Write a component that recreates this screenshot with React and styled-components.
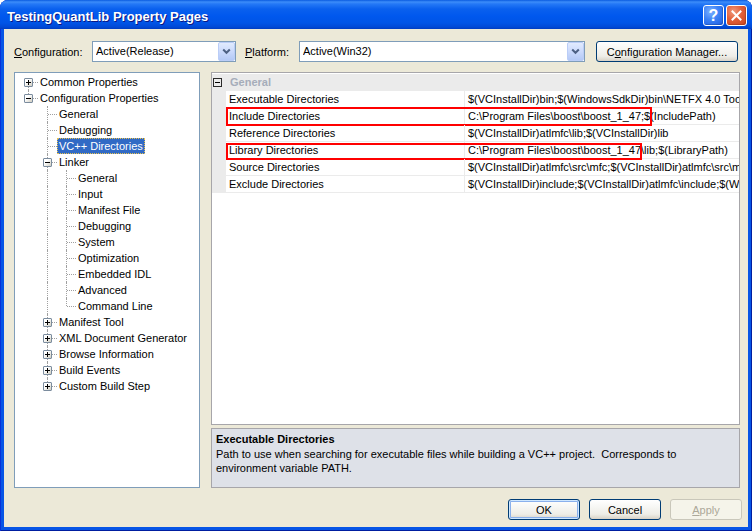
import React from 'react';
import styled, { createGlobalStyle, css } from 'styled-components';

const GlobalStyle = createGlobalStyle`
  html, body { margin: 0; padding: 0; background: #ffffff; }
  body { font-family: "Liberation Sans", Arial, sans-serif; font-size: 11px; color: #000; }
  * { box-sizing: border-box; }
`;

const FONT = `"Liberation Sans", Arial, sans-serif`;
const LINE = '#EBEBEB';
const DOT = '#A0A0A0';

const Window = styled.div`
  width: 752px;
  height: 531px;
  display: flex;
  flex-direction: column;
  background: #0755E6;
  border-radius: 8px 8px 0 0;
  overflow: hidden;
  box-shadow: inset 1px 0 #0831D9, inset -1px 0 #001EA0, inset 0 -1px #001EA0;
`;

const TitleBar = styled.div`
  height: 29px;
  flex: none;
  display: flex;
  align-items: center;
  padding: 0 5px 0 7px;
  background: linear-gradient(
    to bottom,
    #0A5BE0 0px,
    #3D8DF9 2px,
    #2478F6 4px,
    #0A60EE 9px,
    #0058EE 16px,
    #0054E6 23px,
    #0049D6 27px,
    #003CC0 29px
  );
`;

const Title = styled.div`
  flex: 1;
  color: #fff;
  font: bold 13px ${FONT};
  padding-top: 3px;
  text-shadow: 1px 1px #0A1883;
  white-space: nowrap;
`;

const CaptionButtons = styled.div`
  display: flex;
  gap: 2px;
  margin-top: 2px;
`;

const CaptionButton = styled.div`
  width: 21px;
  height: 21px;
  border: 1px solid #fff;
  border-radius: 3px;
  display: flex;
  align-items: center;
  justify-content: center;
  color: #fff;
  font: bold 16px ${FONT};
  background: ${(p) =>
    p.$close
      ? 'radial-gradient(circle at 35% 30%, #F09A7E 0%, #E2603A 45%, #C7421C 100%)'
      : 'radial-gradient(circle at 35% 30%, #7DB1FF 0%, #3C82F6 45%, #1E5BE0 100%)'};
  box-shadow: inset -1px -1px 0 rgba(0, 0, 0, 0.15);
`;

const Body = styled.div`
  flex: 1;
  margin: 0 4px 4px;
  background: #ECE9D8;
  display: flex;
  flex-direction: column;
`;

const ConfigRow = styled.div`
  display: flex;
  align-items: center;
  padding: 12px 0 0 10px;
  height: 33px;
  flex: none;
`;

const FieldLabel = styled.label`
  width: ${(p) => p.$w}px;
  margin-left: ${(p) => p.$ml || 0}px;
  flex: none;
  white-space: nowrap;
  padding-top: 1px;
`;

const Combo = styled.div`
  width: ${(p) => p.$w}px;
  height: 21px;
  flex: none;
  border: 1px solid #7F9DB9;
  background: #fff;
  display: flex;
  align-items: stretch;
  padding-left: 3px;
`;

const ComboText = styled.span`
  flex: 1;
  line-height: 19px;
  white-space: nowrap;
  overflow: hidden;
`;

const ComboButton = styled.span`
  width: 17px;
  flex: none;
  border: 1px solid #BACDF7;
  border-radius: 2px;
  background: linear-gradient(to bottom, #E2EBFE 0%, #CBDAFC 50%, #B4C9F6 100%);
  display: flex;
  align-items: center;
  justify-content: center;
`;

const XPButton = styled.button`
  width: ${(p) => p.$w || 72}px;
  height: 21px;
  flex: none;
  margin-left: ${(p) => p.$ml || 0}px;
  padding: 0;
  font: 11px ${FONT};
  color: #000;
  border: 1px solid #003C74;
  border-radius: 3px;
  background: linear-gradient(to bottom, #FFFFFF 0%, #F7F7F4 35%, #EEEDE7 75%, #D8D2C6 100%);
  ${(p) =>
    p.$default &&
    css`
      box-shadow: inset 0 0 0 1px #CEE7FF, inset 0 0 0 2px #8AB0EC;
    `}
  ${(p) =>
    p.disabled &&
    css`
      color: #ACA899;
      border-color: #C9C7BA;
      background: #F5F4EA;
    `}
`;

const MainArea = styled.div`
  display: flex;
  gap: 11px;
  height: 416px;
  margin-top: 10px;
  padding: 0 8px 0 10px;
  flex: none;
`;

const TreeBox = styled.div`
  width: 186px;
  flex: none;
  border: 1px solid #7F9DB9;
  background: #fff;
  padding-top: 1px;
  display: flex;
  flex-direction: column;
`;

const TreeRow = styled.div`
  height: 16px;
  display: flex;
  align-items: center;
  padding-left: 4px;
`;

const vertical = {
  none: css`display: none;`,
  pipe: css`top: 0; bottom: 0;`,
  tee: css`top: 0; bottom: 0;`,
  ell: css`top: 0; height: 8px;`,
  start: css`top: 8px; bottom: 0;`,
};

const Cell = styled.span`
  position: relative;
  width: 19px;
  height: 16px;
  flex: none;
  display: flex;
  align-items: center;
  padding-left: 5px;
  &::before {
    content: '';
    position: absolute;
    left: 9px;
    border-left: 1px dotted ${DOT};
    ${(p) => vertical[p.$v]}
  }
  ${(p) =>
    p.$last &&
    css`
      &::after {
        content: '';
        position: absolute;
        left: 10px;
        top: 8px;
        width: 9px;
        border-top: 1px dotted ${DOT};
      }
    `}
`;

const Expander = styled.span`
  position: relative;
  z-index: 1;
  width: 9px;
  height: 9px;
  flex: none;
  border: 1px solid #7B8C9E;
  border-radius: 1px;
  background: linear-gradient(135deg, #ffffff 35%, #D0CDC0 100%);
  &::before {
    content: '';
    position: absolute;
    left: 1px;
    top: 3px;
    width: 5px;
    height: 1px;
    background: #000;
  }
  ${(p) =>
    p.$plus &&
    css`
      &::after {
        content: '';
        position: absolute;
        left: 3px;
        top: 1px;
        width: 1px;
        height: 5px;
        background: #000;
      }
    `}
`;

const TreeLabel = styled.span`
  height: 16px;
  line-height: 16px;
  padding: 0 2px;
  white-space: nowrap;
  ${(p) =>
    p.$selected &&
    css`
      background: #316AC5;
      color: #fff;
      outline: 1px dotted #E8C24F;
      outline-offset: -1px;
    `}
`;

const GridPanel = styled.div`
  flex: 1;
  display: flex;
  flex-direction: column;
  gap: 3px;
  min-width: 0;
`;

const GridView = styled.div`
  flex: 1;
  border: 1px solid #A7A6AA;
  background: #fff;
  padding-top: 1px;
  overflow: hidden;
`;

const CategoryRow = styled.div`
  height: 17px;
  display: grid;
  grid-template-columns: 14px 1fr;
  align-items: center;
  background: ${LINE};
`;

const CategoryToggle = styled.span`
  position: relative;
  width: 9px;
  height: 9px;
  margin-left: 1px;
  border: 1px solid #2B2B2B;
  &::before {
    content: '';
    position: absolute;
    left: 1px;
    top: 3px;
    width: 5px;
    height: 1px;
    background: #000;
  }
`;

const CategoryName = styled.span`
  font-weight: bold;
  color: #A6ADBA;
  padding-left: 4px;
  line-height: 17px;
`;

const PropRow = styled.div`
  position: relative;
  height: 17px;
  display: grid;
  grid-template-columns: 14px 239px 1fr;
  border-bottom: 1px solid ${LINE};
`;

const Margin = styled.span`
  background: ${LINE};
`;

const PropName = styled.span`
  padding-left: 3px;
  line-height: 16px;
  border-right: 1px solid ${LINE};
  white-space: nowrap;
  overflow: hidden;
`;

const PropValue = styled.span`
  padding-left: 3px;
  line-height: 16px;
  white-space: nowrap;
  overflow: hidden;
`;

const Highlight = styled.span`
  position: absolute;
  left: 14px;
  top: ${(p) => p.$top}px;
  width: ${(p) => p.$w}px;
  height: ${(p) => p.$h}px;
  border: 2px solid #FF0000;
  pointer-events: none;
`;

const DescPanel = styled.div`
  height: 60px;
  flex: none;
  border: 1px solid #A7A6AA;
  background: #DEE1E8;
  padding: 3px 4px 0;
  line-height: 14px;
`;

const DescTitle = styled.div`
  font-weight: bold;
  margin-bottom: 1px;
`;

const DescText = styled.div`
  white-space: pre;
`;

const ButtonRow = styled.div`
  display: flex;
  justify-content: flex-end;
  gap: 9px;
  margin-top: 11px;
  padding-right: 6px;
`;

const Chevron = () => (
  <svg width="9" height="7" viewBox="0 0 9 7">
    <path d="M1.2 1.5 L4.5 4.8 L7.8 1.5" fill="none" stroke="#4D6185" strokeWidth="2" />
  </svg>
);

const CloseGlyph = () => (
  <svg width="11" height="11" viewBox="0 0 11 11">
    <path d="M1.5 1.5 L9.5 9.5 M9.5 1.5 L1.5 9.5" stroke="#fff" strokeWidth="2" strokeLinecap="square" />
  </svg>
);

const tree = [
  { label: 'Common Properties', cells: ['start'], exp: '+' },
  { label: 'Configuration Properties', cells: ['ell'], exp: '-' },
  { label: 'General', cells: ['none', 'tee'] },
  { label: 'Debugging', cells: ['none', 'tee'] },
  { label: 'VC++ Directories', cells: ['none', 'tee'], selected: true },
  { label: 'Linker', cells: ['none', 'tee'], exp: '-' },
  { label: 'General', cells: ['none', 'pipe', 'tee'] },
  { label: 'Input', cells: ['none', 'pipe', 'tee'] },
  { label: 'Manifest File', cells: ['none', 'pipe', 'tee'] },
  { label: 'Debugging', cells: ['none', 'pipe', 'tee'] },
  { label: 'System', cells: ['none', 'pipe', 'tee'] },
  { label: 'Optimization', cells: ['none', 'pipe', 'tee'] },
  { label: 'Embedded IDL', cells: ['none', 'pipe', 'tee'] },
  { label: 'Advanced', cells: ['none', 'pipe', 'tee'] },
  { label: 'Command Line', cells: ['none', 'pipe', 'ell'] },
  { label: 'Manifest Tool', cells: ['none', 'tee'], exp: '+' },
  { label: 'XML Document Generator', cells: ['none', 'tee'], exp: '+' },
  { label: 'Browse Information', cells: ['none', 'tee'], exp: '+' },
  { label: 'Build Events', cells: ['none', 'tee'], exp: '+' },
  { label: 'Custom Build Step', cells: ['none', 'ell'], exp: '+' },
];

const props = [
  { name: 'Executable Directories', value: String.raw`$(VCInstallDir)bin;$(WindowsSdkDir)bin\NETFX 4.0 Tools;$(WindowsSdkDir)bin;$(VSInstallDir)Common7\Tools\bin` },
  { name: 'Include Directories', value: String.raw`C:\Program Files\boost\boost_1_47;$(IncludePath)`, mark: { top: -1, w: 426, h: 19 } },
  { name: 'Reference Directories', value: String.raw`$(VCInstallDir)atlmfc\lib;$(VCInstallDir)lib` },
  { name: 'Library Directories', value: String.raw`C:\Program Files\boost\boost_1_47\lib;$(LibraryPath)`, mark: { top: 1, w: 416, h: 17 } },
  { name: 'Source Directories', value: String.raw`$(VCInstallDir)atlmfc\src\mfc;$(VCInstallDir)atlmfc\src\mfcm;$(VCInstallDir)atlmfc\src\atl;$(VCInstallDir)crt\src` },
  { name: 'Exclude Directories', value: String.raw`$(VCInstallDir)include;$(VCInstallDir)atlmfc\include;$(WindowsSdkDir)include;$(FrameworkSDKDir)\include` },
];

export default function App() {
  return (
    <>
      <GlobalStyle />
      <Window>
        <TitleBar>
          <Title>TestingQuantLib Property Pages</Title>
          <CaptionButtons>
            <CaptionButton>?</CaptionButton>
            <CaptionButton $close>
              <CloseGlyph />
            </CaptionButton>
          </CaptionButtons>
        </TitleBar>
        <Body>
          <ConfigRow>
            <FieldLabel $w={78}>
              <u>C</u>onfiguration:
            </FieldLabel>
            <Combo $w={144}>
              <ComboText>Active(Release)</ComboText>
              <ComboButton>
                <Chevron />
              </ComboButton>
            </Combo>
            <FieldLabel $w={54} $ml={9}>
              <u>P</u>latform:
            </FieldLabel>
            <Combo $w={286}>
              <ComboText>Active(Win32)</ComboText>
              <ComboButton>
                <Chevron />
              </ComboButton>
            </Combo>
            <XPButton $w={142} $ml={11}>
              C<u>o</u>nfiguration Manager...
            </XPButton>
          </ConfigRow>

          <MainArea>
            <TreeBox>
              {tree.map((item, i) => (
                <TreeRow key={i}>
                  {item.cells.map((c, j) => {
                    const last = j === item.cells.length - 1;
                    return (
                      <Cell key={j} $v={c} $last={last}>
                        {last && item.exp && <Expander $plus={item.exp === '+'} />}
                      </Cell>
                    );
                  })}
                  <TreeLabel $selected={item.selected}>{item.label}</TreeLabel>
                </TreeRow>
              ))}
            </TreeBox>

            <GridPanel>
              <GridView>
                <CategoryRow>
                  <CategoryToggle />
                  <CategoryName>General</CategoryName>
                </CategoryRow>
                {props.map((p) => (
                  <PropRow key={p.name}>
                    <Margin />
                    <PropName>{p.name}</PropName>
                    <PropValue>{p.value}</PropValue>
                    {p.mark && <Highlight $top={p.mark.top} $w={p.mark.w} $h={p.mark.h} />}
                  </PropRow>
                ))}
              </GridView>
              <DescPanel>
                <DescTitle>Executable Directories</DescTitle>
                <DescText>
                  {'Path to use when searching for executable files while building a VC++ project.  Corresponds to\nenvironment variable PATH.'}
                </DescText>
              </DescPanel>
            </GridPanel>
          </MainArea>

          <ButtonRow>
            <XPButton $default>OK</XPButton>
            <XPButton>Cancel</XPButton>
            <XPButton disabled>
              <u>A</u>pply
            </XPButton>
          </ButtonRow>
        </Body>
      </Window>
    </>
  );
}
